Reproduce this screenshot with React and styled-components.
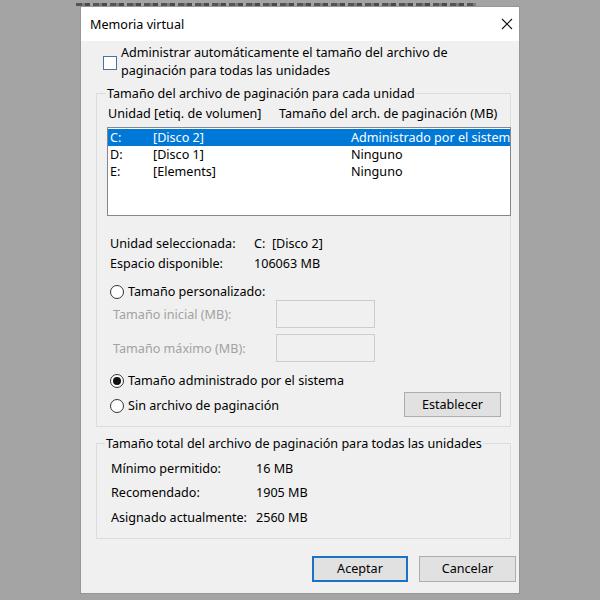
import styled, { createGlobalStyle } from "styled-components";

const Global = createGlobalStyle`
  html, body {
    margin: 0;
    padding: 0;
    background: #a4a4a4;
  }
  * {
    box-sizing: border-box;
    font-family: "Noto Sans", "Liberation Sans", sans-serif;
  }
`;

const Page = styled.div`
  width: 600px;
  height: 600px;
  overflow: hidden;
`;

/* the window behind the dialog only shows as a smudged strip */
const BehindStrip = styled.div`
  height: 7px;
  display: flex;
  align-items: flex-end;
  padding: 0 0 1px 76px;
  div {
    width: 400px;
    height: 3px;
    background: repeating-linear-gradient(
      90deg,
      #555 0 6px,
      #7c7c7c 6px 9px,
      #4a4a4a 9px 14px,
      #a4a4a4 14px 17px
    );
    filter: blur(0.7px);
  }
`;

const Dialog = styled.div`
  margin-left: 81px;
  width: 438px;
  height: 586px;
  background: #f0f0f0;
  display: flex;
  flex-direction: column;
  box-shadow: 0 0 0 1px rgba(0, 0, 0, 0.08);
`;

const TitleBar = styled.div`
  height: 34px;
  background: #ffffff;
  display: flex;
  align-items: center;
  justify-content: space-between;
  padding: 0 6px 0 9px;
  font-size: 12.6px;
  color: #000;
`;

const CloseIcon = () => (
  <svg width="12" height="12" viewBox="0 0 12 12">
    <path d="M1 1L11 11M11 1L1 11" stroke="#111" strokeWidth="1.1" fill="none" />
  </svg>
);

const Body = styled.div`
  flex: 1;
  display: flex;
  flex-direction: column;
  padding: 3px 8px 0 15px;
  font-size: 12.6px;
  color: #000;
`;

const CheckRow = styled.label`
  display: flex;
  align-items: center;
  gap: 4px;
  padding-left: 7px;
  line-height: 18px;
`;

const CheckBox = styled.span`
  width: 14px;
  height: 14px;
  flex: none;
  border: 1px solid #4b7399;
  background: #fff;
  margin-top: 2px;
`;

const Group = styled.fieldset`
  margin: ${(p) => p.$mt || 5}px 0 0 0;
  padding: 0 9px ${(p) => p.$pb || 9}px 10px;
  border: 1px solid #dcdcdc;
  min-width: 0;
`;

const Legend = styled.legend`
  padding: 0 1px;
  margin-left: ${(p) => p.$ml ?? -1}px;
  line-height: 17px;
`;

const ColHeads = styled.div`
  display: grid;
  grid-template-columns: 171px 1fr;
  line-height: 17px;
  margin-top: 3px;
  padding-left: 1px;
  white-space: nowrap;
`;

const ListBox = styled.div`
  margin-top: 5px;
  margin-right: -10px;
  height: 89px;
  background: #fff;
  border: 1px solid #828790;
  padding: 1px 0;
  overflow: hidden;
`;

const ListRow = styled.div`
  display: grid;
  grid-template-columns: 43px 198px 1fr;
  height: 17px;
  line-height: 17px;
  padding-left: 2px;
  white-space: nowrap;
  overflow: hidden;
  background: ${(p) => (p.$selected ? "#0078d7" : "transparent")};
  color: ${(p) => (p.$selected ? "#fff" : "#000")};
`;

const InfoGrid = styled.div`
  display: grid;
  grid-template-columns: 144px 1fr;
  line-height: 20px;
  margin-top: 18px;
  padding-left: 3px;
`;

const RadioRow = styled.label`
  display: flex;
  align-items: center;
  gap: 4px;
  line-height: 20px;
  margin-top: ${(p) => p.$mt || 0}px;
  padding-left: 3px;
`;

const Radio = styled.span`
  width: 14px;
  height: 14px;
  flex: none;
  border-radius: 50%;
  border: 1px solid #333;
  background: #fff;
  display: flex;
  align-items: center;
  justify-content: center;
  &::after {
    content: "";
    width: 8px;
    height: 8px;
    border-radius: 50%;
    background: ${(p) => (p.$checked ? "#111" : "transparent")};
  }
`;

const SizeRow = styled.div`
  display: grid;
  grid-template-columns: 163px 99px;
  align-items: center;
  margin-top: ${(p) => p.$mt || 0}px;
  padding-left: 6px;
  color: #a2a2a2;
  white-space: nowrap;
`;

const SizeInput = styled.div`
  height: 28px;
  border: 1px solid #cccccc;
  background: #f0f0f0;
`;

const BottomRow = styled.div`
  display: flex;
  align-items: center;
  justify-content: space-between;
  margin-top: 1px;
  & > label {
    padding-top: 3px;
  }
`;

const Button = styled.button`
  width: ${(p) => p.$w || 97}px;
  height: ${(p) => p.$h || 25}px;
  background: #e1e1e1;
  border: ${(p) => (p.$primary ? "2px solid #1b72c4" : "1px solid #adadad")};
  font-size: 12.6px;
  color: #000;
  padding: 0;
  font-family: inherit;
`;

const TotalsGrid = styled.div`
  display: grid;
  grid-template-columns: 145px 1fr;
  grid-auto-rows: 24.5px;
  align-items: center;
  margin-top: 4px;
  padding-left: 4px;
`;

const Footer = styled.div`
  display: flex;
  justify-content: flex-end;
  gap: 11px;
  margin-top: 17px;
  margin-right: -5px;
`;

const drives = [
  { letter: "C:", label: "[Disco 2]", size: "Administrado por el sistema", selected: true },
  { letter: "D:", label: "[Disco 1]", size: "Ninguno" },
  { letter: "E:", label: "[Elements]", size: "Ninguno" },
];

export default function App() {
  return (
    <Page>
      <Global />
      <BehindStrip>
        <div />
      </BehindStrip>
      <Dialog>
        <TitleBar>
          <span>Memoria virtual</span>
          <CloseIcon />
        </TitleBar>
        <Body>
          <CheckRow>
            <CheckBox />
            <span>
              Administrar automáticamente el tamaño del archivo de
              <br />
              paginación para todas las unidades
            </span>
          </CheckRow>

          <Group>
            <Legend>Tamaño del archivo de paginación para cada unidad</Legend>
            <ColHeads>
              <span>Unidad [etiq. de volumen]</span>
              <span>Tamaño del arch. de paginación (MB)</span>
            </ColHeads>
            <ListBox>
              {drives.map((d) => (
                <ListRow key={d.letter} $selected={d.selected}>
                  <span>{d.letter}</span>
                  <span>{d.label}</span>
                  <span>{d.size}</span>
                </ListRow>
              ))}
            </ListBox>

            <InfoGrid>
              <span>Unidad seleccionada:</span>
              <span>C:&nbsp; [Disco 2]</span>
              <span>Espacio disponible:</span>
              <span>106063 MB</span>
            </InfoGrid>

            <RadioRow $mt={8}>
              <Radio />
              <span>Tamaño personalizado:</span>
            </RadioRow>
            <SizeRow $mt={-2}>
              <span>Tamaño inicial (MB):</span>
              <SizeInput />
            </SizeRow>
            <SizeRow $mt={6}>
              <span>Tamaño máximo (MB):</span>
              <SizeInput />
            </SizeRow>

            <RadioRow $mt={9}>
              <Radio $checked />
              <span>Tamaño administrado por el sistema</span>
            </RadioRow>
            <BottomRow>
              <RadioRow>
                <Radio />
                <span>Sin archivo de paginación</span>
              </RadioRow>
              <Button>Establecer</Button>
            </BottomRow>
          </Group>

          <Group $mt={8} $pb={8}>
            <Legend $ml={-2}>Tamaño total del archivo de paginación para todas las unidades</Legend>
            <TotalsGrid>
              <span>Mínimo permitido:</span>
              <span>16 MB</span>
              <span>Recomendado:</span>
              <span>1905 MB</span>
              <span>Asignado actualmente:</span>
              <span>2560 MB</span>
            </TotalsGrid>
          </Group>

          <Footer>
            <Button $primary $w={96} $h={26}>
              Aceptar
            </Button>
            <Button $w={97} $h={26}>
              Cancelar
            </Button>
          </Footer>
        </Body>
      </Dialog>
    </Page>
  );
}
